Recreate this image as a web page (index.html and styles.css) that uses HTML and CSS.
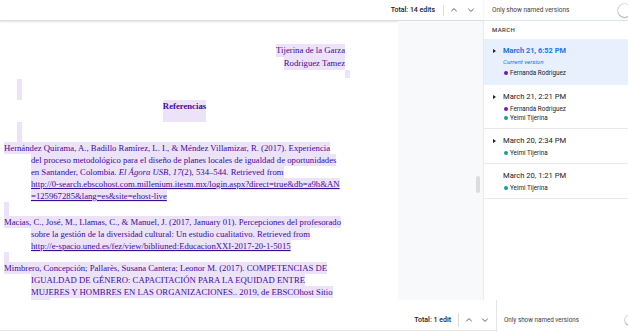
FILE: index.html
```html
<!DOCTYPE html>
<html lang="es">
<head>
<meta charset="utf-8">
<title>Historial de versiones</title>
<link rel="stylesheet" href="styles.css">
</head>
<body>
<div class="app">
  <div class="top">
    <div class="toolbar">
      <span class="total">Total: 14 edits</span>
      <span class="vsep"></span>
      <span class="chev"><svg width="10" height="10" viewBox="0 0 10 10"><polyline points="2.3,6.2 5,3.6 7.7,6.2" fill="none" stroke="#5f6368" stroke-width="1"/></svg></span>
      <span class="chev"><svg width="10" height="10" viewBox="0 0 10 10"><polyline points="2.3,3.8 5,6.4 7.7,3.8" fill="none" stroke="#5f6368" stroke-width="1"/></svg></span>
    </div>
    <div class="phead">
      <span class="named">Only show named versions</span>
      <span class="toggle"></span>
    </div>
  </div>

  <div class="main">
    <div class="doc">
      <div class="hdr">
        <div class="hln"><span class="hl">Tijerina de la Garza</span></div>
        <div class="hln"><span class="hl">Rodriguez Tamez</span></div>
        <div class="hln short"><span class="stub push"></span></div>
      </div>
      <div class="gapline tall1"><span class="stub"></span></div>
      <div class="refs">
        <div class="title-ln"><span class="hl strong">Referencias</span></div>
        <div class="empty e1"><span class="stub tab"></span></div>

        <div class="ln"><span class="hl">Hernández Quirama, A., Badillo Ramírez, L. I., &amp; Méndez Villamizar, R. (2017). Experiencia</span></div>
        <div class="ln ind"><span class="hl">del proceso metodológico para el diseño de planes locales de igualdad de oportunidades</span></div>
        <div class="ln ind"><span class="hl">en Santander, Colombia. <i>El Ágora USB</i>, <i>17</i>(2), 534–544. Retrieved from</span></div>
        <div class="ln ind"><span class="hl"><a class="lnk">http://0-search.ebscohost.com.millenium.itesm.mx/login.aspx?direct=true&amp;db=a9h&amp;AN</a></span></div>
        <div class="ln ind"><span class="hl"><a class="lnk">=125967285&amp;lang=es&amp;site=ehost-live</a></span></div>
        <div class="empty e2"><span class="stub"></span></div>

        <div class="ln"><span class="hl">Macias, C., José, M., Llamas, C., &amp; Manuel, J. (2017, January 01). Percepciones del profesorado</span></div>
        <div class="ln ind"><span class="hl">sobre la gestión de la diversidad cultural: Un estudio cualitativo. Retrieved from</span></div>
        <div class="ln ind"><span class="hl"><a class="lnk">http://e-spacio.uned.es/fez/view/bibliuned:EducacionXXI-2017-20-1-5015</a></span></div>
        <div class="empty e3"><span class="stub"></span></div>

        <div class="ln"><span class="hl">Mimbrero, Concepción; Pallarès, Susana Cantera; Leonor M. (2017). COMPETENCIAS DE</span></div>
        <div class="ln ind"><span class="hl">IGUALDAD DE GÉNERO: CAPACITACIÓN PARA LA EQUIDAD ENTRE</span></div>
        <div class="ln ind"><span class="hl">MUJERES Y HOMBRES EN LAS ORGANIZACIONES.. 2019, de EBSCOhost Sitio</span></div>
        <div class="empty e4 ind"><span class="stub wide"></span></div>
      </div>
    </div>

    <div class="gutter"><div class="thumb"></div></div>

    <div class="panel">
      <div class="month">MARCH</div>

      <div class="item sel">
        <div class="caret"><span class="tri"></span></div>
        <div class="body">
          <div class="vtitle">March 21, 6:52 PM</div>
          <div class="cur">Current version</div>
          <div class="user"><span class="dot purple"></span>Fernanda Rodriguez</div>
        </div>
      </div>

      <div class="item">
        <div class="caret"><span class="tri"></span></div>
        <div class="body">
          <div class="vtitle">March 21, 2:21 PM</div>
          <div class="users">
            <div class="user"><span class="dot purple"></span>Fernanda Rodriguez</div>
            <div class="user"><span class="dot teal"></span>Yeimi Tijerina</div>
          </div>
        </div>
      </div>

      <div class="item">
        <div class="caret"><span class="tri"></span></div>
        <div class="body">
          <div class="vtitle">March 20, 2:34 PM</div>
          <div class="users">
            <div class="user"><span class="dot teal"></span>Yeimi Tijerina</div>
          </div>
        </div>
      </div>

      <div class="item">
        <div class="caret"></div>
        <div class="body">
          <div class="vtitle">March 20, 1:21 PM</div>
          <div class="users">
            <div class="user"><span class="dot teal"></span>Yeimi Tijerina</div>
          </div>
        </div>
      </div>
    </div>
  </div>

  <div class="bottom">
    <div class="btool">
      <span class="total">Total: 1 edit</span>
      <span class="vsep b"></span>
      <span class="chev"><svg width="10" height="10" viewBox="0 0 10 10"><polyline points="2.3,6.2 5,3.6 7.7,6.2" fill="none" stroke="#5f6368" stroke-width="1"/></svg></span>
      <span class="chev"><svg width="10" height="10" viewBox="0 0 10 10"><polyline points="2.3,3.8 5,6.4 7.7,3.8" fill="none" stroke="#5f6368" stroke-width="1"/></svg></span>
    </div>
    <div class="bphead">
      <span class="named sm">Only show named versions</span>
      <span class="toggle b"></span>
    </div>
  </div>
</div>
</body>
</html>
```

FILE: styles.css
```css
* { box-sizing: border-box; margin: 0; padding: 0; }

html, body { width: 628px; height: 332px; overflow: hidden; background: #fff; }

body { font-family: Roboto, "Liberation Sans", Arial, sans-serif; color: #202124; }

.app { display: grid; grid-template-rows: 21px 279px 32px; height: 332px; width: 628px; }

/* ---------- top bar ---------- */
.top { display: flex; }

.toolbar {
  width: 483px;
  display: flex;
  align-items: center;
  justify-content: flex-end;
  padding-right: 7px;
  border-bottom: 1px solid #dadce0;
  box-shadow: 0 1px 2px rgba(60, 64, 67, 0.15);
}

.total { font-size: 7px; font-weight: 500; color: #202124; line-height: 12px; }

.vsep { width: 1px; height: 11px; background: #dadce0; margin: 0 5px 0 8px; }
.vsep.b { height: 14px; margin: 0 5px 0 7px; }

.chev { width: 10px; height: 10px; display: flex; align-items: center; justify-content: center; }
.chev + .chev { margin-left: 7px; }
.btool .chev + .chev { margin-left: 6px; }
.chev svg { display: block; }

.phead {
  width: 145px;
  display: flex;
  align-items: center;
  justify-content: space-between;
  padding-left: 9px;
  border-bottom: 1px solid #dde5f1;
}

.named { font-size: 6.5px; color: #3c4043; line-height: 10px; }
.named.sm { font-size: 6.3px; }

.toggle {
  width: 13px;
  height: 13px;
  border-radius: 50%;
  background: #fff;
  box-shadow: 0 0 0 0.6px rgba(0, 0, 0, 0.22), 0 1px 1.5px rgba(0, 0, 0, 0.25);
  margin-right: -3px;
  flex-shrink: 0;
}
.toggle.b { width: 10px; height: 10px; margin-right: -7px; }

/* ---------- main ---------- */
.main { display: flex; height: 279px; }

.doc {
  width: 398px;
  padding-top: 23px;
  font-family: "Liberation Serif", "Times New Roman", serif;
  font-size: 8.7px;
  color: #3d0a99;
  white-space: nowrap;
  overflow: hidden;
}

.hl { display: inline-block; height: 100%; background: #ede3f9; vertical-align: top; }
.hl.strong { font-weight: 700; height: 22px; line-height: 12px; }

.stub { display: inline-block; width: 5px; height: 100%; background: #ede3f9; vertical-align: top; }
.stub.push { margin-right: -5px; }
.stub.tab { margin-left: 13px; }
.stub.wide { width: 19px; }

.hdr { text-align: right; padding-right: 53px; }
.hln { height: 13px; line-height: 13px; }
.hln.short { height: 8px; }

.gapline.tall1 { height: 21px; margin-top: 1px; padding-left: 17px; }

.refs { width: 365px; padding-left: 4px; }

.title-ln { height: 22px; text-align: center; }

.ln { height: 12px; line-height: 12px; }
.ind { padding-left: 27px; }

.empty.e1 { height: 20px; }
.empty.e2 { height: 14px; }
.empty.e3 { height: 10px; }
.empty.e4 { height: 5px; }

.lnk { color: inherit; text-decoration: underline; }

/* ---------- gutter ---------- */
.gutter {
  width: 85px;
  background: #f8f9fa;
  display: flex;
  justify-content: flex-end;
  align-items: flex-start;
  padding-top: 155px;
  padding-right: 3px;
}
.thumb { width: 4px; height: 17px; border-radius: 2px; background: #dadce0; }

/* ---------- versions panel ---------- */
.panel { width: 145px; border-left: 1px solid #e8eaed; }

.month {
  height: 18px;
  line-height: 18px;
  padding-left: 8px;
  font-size: 6px;
  font-weight: 500;
  letter-spacing: 0.4px;
  color: #3c4043;
}

.item {
  display: flex;
  padding: 6px 0 6px 9px;
  border-bottom: 1px solid #e8eaed;
}
.item.sel { background: #e8f0fe; padding-bottom: 7px; border-bottom-color: #e8f0fe; }

.caret { width: 10px; height: 12px; display: flex; align-items: center; flex-shrink: 0; }
.tri {
  width: 0;
  height: 0;
  border-left: 3.5px solid #202124;
  border-top: 2.5px solid transparent;
  border-bottom: 2.5px solid transparent;
}

.vtitle { font-size: 7.6px; line-height: 12px; color: #202124; }
.sel .vtitle { color: #1a73e8; font-weight: 700; font-size: 7.4px; }

.cur { font-size: 6.2px; font-style: italic; color: #1a73e8; line-height: 11px; }

.users { margin-top: 1px; }

.user { display: flex; align-items: center; height: 9px; font-size: 6.3px; color: #202124; }

.dot { width: 4px; height: 4px; border-radius: 50%; margin: 0 2px 0 1px; flex-shrink: 0; }
.dot.purple { background: #6a1bb3; }
.dot.teal { background: #12a08f; }

/* ---------- bottom bar ---------- */
.bottom { display: flex; }

.btool {
  width: 496px;
  height: 31px;
  display: flex;
  align-items: center;
  justify-content: flex-end;
  padding: 10px 6px 0 0;
  border-bottom: 1px solid #e3e5e8;
}

.bphead {
  width: 132px;
  display: flex;
  align-items: center;
  justify-content: space-between;
  padding: 8px 0 0 7px;
  border-left: 1px solid #e3e5e8;
}
```
